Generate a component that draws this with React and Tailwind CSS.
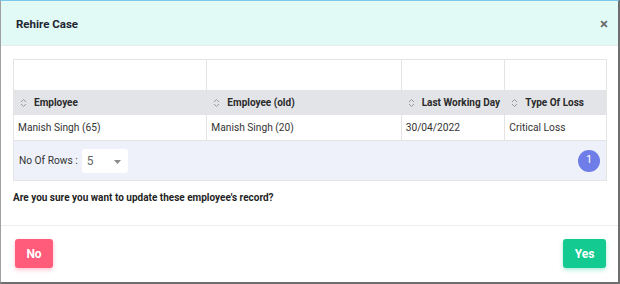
function SortIcon() {
  return (
    <svg width="7" height="10" viewBox="0 0 7 10" className="shrink-0">
      <path d="M1 4 L3.5 1.5 L6 4" fill="none" stroke="#9a9a9a" strokeWidth="1" />
      <path d="M1 6 L3.5 8.5 L6 6" fill="none" stroke="#9a9a9a" strokeWidth="1" />
    </svg>
  );
}

const cols = [
  { label: "Employee", w: "w-[194px]", value: "Manish Singh (65)" },
  { label: "Employee (old)", w: "w-[195px]", value: "Manish Singh (20)" },
  { label: "Last Working Day", w: "w-[104px]", value: "30/04/2022" },
  { label: "Type Of Loss", w: "w-[101px]", value: "Critical Loss" },
];

export default function App() {
  return (
    <div className="w-[620px] h-[284px] bg-white border-t border-t-[#7cc8ea] border-l border-l-[#a0a0a0] border-r-2 border-r-[#6e6e6e] border-b-2 border-b-[#6e6e6e] font-['Roboto',sans-serif] text-[#222] flex flex-col overflow-hidden">
      {/* header */}
      <div className="h-[45px] shrink-0 bg-[#e1faf6] border-b border-[#e8ecef] flex items-center justify-between pl-[15px] pr-[10px] pt-[3px]">
        <h1 className="text-[11.5px] font-bold text-[#1f2430]">Rehire Case</h1>
        <span className="text-[15px] font-bold text-[#6b6b6b] leading-none">×</span>
      </div>

      {/* body */}
      <div className="pl-3 pr-[11px] pt-[13px]">
        <div className="w-[594px] border border-[#e4e4e4]">
          {/* filter row */}
          <div className="flex h-[30px] bg-white">
            {cols.map((c, i) => (
              <div key={i} className={`${c.w} ${i < 3 ? "border-r border-[#e4e4e4]" : ""}`} />
            ))}
          </div>
          {/* header row */}
          <div className="flex h-[25px] bg-[#e3e4e8]">
            {cols.map((c, i) => (
              <div key={i} className={`${c.w} flex items-center gap-[7px] pl-[6px] text-[10px] font-bold text-[#2a2a2a] whitespace-nowrap ${i < 3 ? "border-r border-[#e4e4e4]" : ""}`}>
                <SortIcon />
                <span>{c.label}</span>
              </div>
            ))}
          </div>
          {/* data row */}
          <div className="flex h-[26px] bg-white border-b border-[#e4e4e4]">
            {cols.map((c, i) => (
              <div key={i} className={`${c.w} flex items-center pl-[4px] text-[10.2px] text-[#333] ${i < 3 ? "border-r border-[#e4e4e4]" : ""}`}>
                {c.value}
              </div>
            ))}
          </div>
          {/* pagination */}
          <div className="h-[39px] bg-[#eef1fa] flex items-center justify-between pl-[5px] pr-[6px]">
            <div className="flex items-center gap-[4px] text-[10.2px] text-[#333]">
              <span>No Of Rows :</span>
              <div className="w-[46px] h-[24px] bg-white rounded-[3px] flex items-center justify-between pl-[5px] pr-[7px]">
                <span className="text-[#666] text-[12px]">5</span>
                <svg width="7" height="4" viewBox="0 0 7 4" className="mt-[3px]">
                  <path d="M0 0 L7 0 L3.5 4 Z" fill="#8a8a8a" />
                </svg>
              </div>
            </div>
            <div className="w-[22px] h-[22px] rounded-full bg-[#6f7de8] text-white text-[11px] flex items-center justify-center">
              1
            </div>
          </div>
        </div>
        <p className="mt-[9px] text-[10px] font-bold text-[#1f1f1f]">
          Are you sure you want to update these employee's record?
        </p>
      </div>

      {/* footer */}
      <div className="mt-auto h-[57px] border-t border-[#eceef3] flex items-start justify-between pt-[13px] pl-[14px] pr-[12px]">
        <button className="w-[38px] h-[29px] rounded-[3px] bg-[#ff5b7b] text-white text-[12px] font-bold shadow-[0_2px_4px_rgba(255,91,123,0.35)]">
          No
        </button>
        <button className="w-[43px] h-[29px] rounded-[3px] bg-[#13ca91] text-white text-[12px] font-bold shadow-[0_2px_4px_rgba(19,202,145,0.35)]">
          Yes
        </button>
      </div>
    </div>
  );
}
